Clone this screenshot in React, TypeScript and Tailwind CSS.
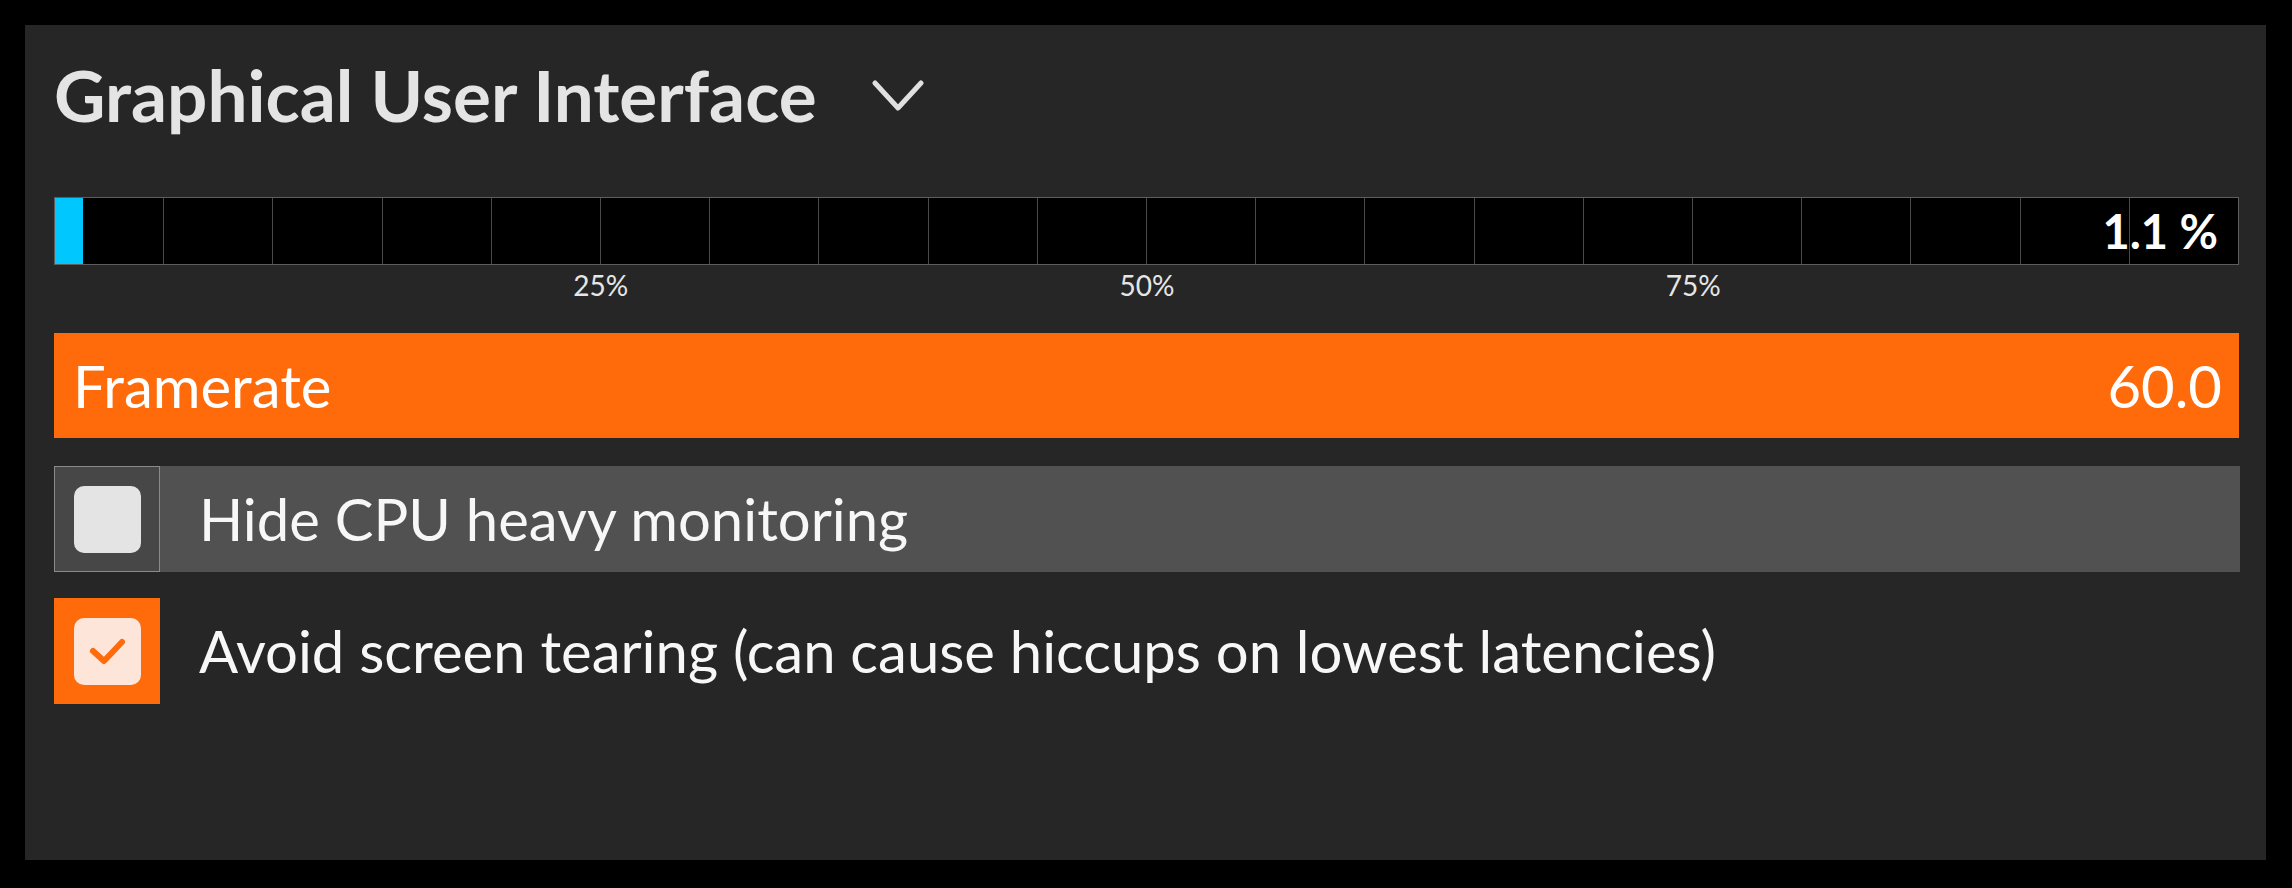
import React from "react";

const font = { fontFamily: "Lato, 'Open Sans', sans-serif" };

const ticks = Array.from({ length: 20 }, (_, i) => i);

const Meter = ({ value }: { value: number }) => {
	return (
		<div className="mt-[67px]">
			<div className="grid h-[68px] w-[2185px] border border-[#5e5e5e] bg-black">
				<div className="col-start-1 row-start-1 flex">
					{ticks.map((i) => (
						<div key={i} className={i < 19 ? "flex-1 border-r border-[#4a4a4a]" : "flex-1"} />
					))}
				</div>
				<div className="col-start-1 row-start-1 flex">
					<div className="h-full w-[28px] bg-[#00c8ff]" />
				</div>
				<div className="col-start-1 row-start-1 flex items-center justify-end pr-[20px] text-[47px] leading-none font-bold text-white">
					{value.toFixed(1)} %
				</div>
			</div>
			<div className="grid w-[2185px] grid-cols-4 pt-[6px] text-[28px] leading-none text-[#e6e6e6]">
				<div />
				<div className="-ml-[27px] w-[54px] text-center">25%</div>
				<div className="-ml-[27px] w-[54px] text-center">50%</div>
				<div className="-ml-[27px] w-[54px] text-center">75%</div>
			</div>
		</div>
	);
};

const Check = ({ checked, label }: { checked: boolean; label: string }) => {
	return (
		<div className={`flex h-[106px] w-[2186px] items-center ${checked ? "" : "bg-[#515151]"}`}>
			<div
				className={`flex h-full w-[106px] items-center justify-center ${
					checked ? "bg-[#ff6a0a]" : "border border-[#8a8a8a] bg-[#474747]"
				}`}
			>
				<div
					className={`flex h-[67px] w-[67px] items-center justify-center rounded-[10px] ${
						checked ? "bg-[#fde6d9]" : "bg-[#e4e4e4]"
					}`}
				>
					{checked && (
						<svg width="40" height="30" viewBox="0 0 40 30">
							<path d="M6 15 L17 25 L35 6" fill="none" stroke="#ff6a0a" strokeWidth="6" strokeLinecap="round" strokeLinejoin="round" />
						</svg>
					)}
				</div>
			</div>
			<span className="ml-[39px] text-[58px] leading-none text-[#f7f7f7]">{label}</span>
		</div>
	);
};

export default function App() {
	return (
		<div className="h-[888px] w-full bg-black pl-[25px] pt-[25px]" style={font}>
			<div className="flex h-[835px] w-[2241px] flex-col bg-[#262626] pl-[29px]">
				<div className="mt-[34px] flex items-center">
					<h1 className="text-[71px] leading-none font-bold text-[#e4e4e4]">Graphical User Interface</h1>
					<svg className="ml-[55px] mt-[2px]" width="52" height="32" viewBox="0 0 52 32">
						<path d="M3 3 L26 28 L49 3" fill="none" stroke="#e0e0e0" strokeWidth="5" strokeLinecap="round" strokeLinejoin="round" />
					</svg>
				</div>

				<Meter value={1.1} />

				<div className="mt-[34px] flex h-[105px] w-[2185px] items-center justify-between bg-[#ff6a0a] pl-[19px] pr-[17px] text-[58px] leading-none text-white">
					<span>Framerate</span>
					<span>60.0</span>
				</div>

				<div className="mt-[28px] flex flex-col gap-[26px]">
					<Check checked={false} label="Hide CPU heavy monitoring" />
					<Check checked={true} label="Avoid screen tearing (can cause hiccups on lowest latencies)" />
				</div>
			</div>
		</div>
	);
}
